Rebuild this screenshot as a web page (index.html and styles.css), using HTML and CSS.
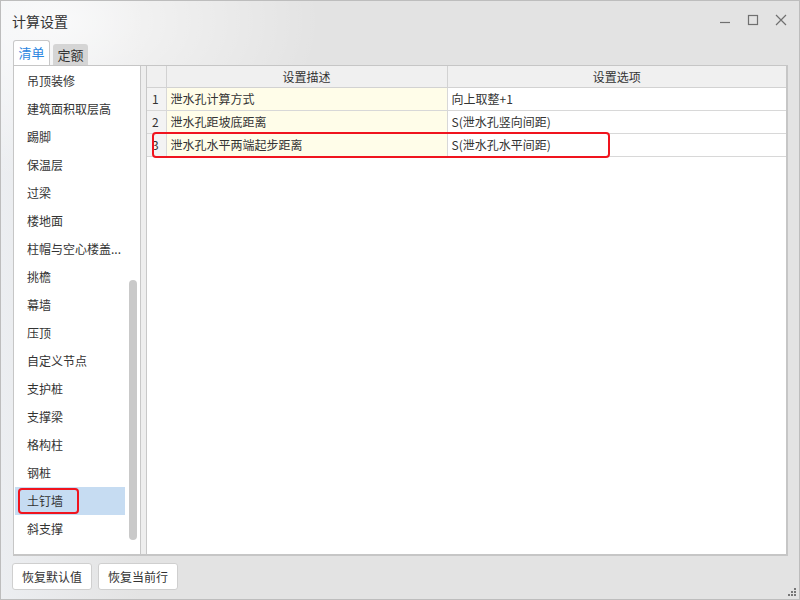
FILE: index.html
```html
<!DOCTYPE html>
<html lang="zh-CN">
<head>
<meta charset="utf-8">
<title>计算设置</title>
<link rel="stylesheet" href="styles.css">
</head>
<body>
<div class="window">
  <div class="titlebar">
    <span class="title">计算设置</span>
    <div class="controls">
      <svg class="ctl" width="12" height="12" viewBox="0 0 12 12"><path d="M1 8.5H11" stroke="#707070" stroke-width="1.2" fill="none"/></svg>
      <svg class="ctl" width="12" height="12" viewBox="0 0 12 12"><rect x="1.5" y="1.5" width="9" height="9" stroke="#707070" stroke-width="1.2" fill="none"/></svg>
      <svg class="ctl" width="12" height="12" viewBox="0 0 12 12"><path d="M1 1L11 11M11 1L1 11" stroke="#707070" stroke-width="1.2" fill="none"/></svg>
    </div>
  </div>
  <div class="tabs">
    <div class="tab active">清单</div>
    <div class="tab">定额</div>
  </div>
  <div class="content">
    <div class="list">
      <div class="item">吊顶装修</div>
      <div class="item">建筑面积取层高</div>
      <div class="item">踢脚</div>
      <div class="item">保温层</div>
      <div class="item">过梁</div>
      <div class="item">楼地面</div>
      <div class="item">柱帽与空心楼盖...</div>
      <div class="item">挑檐</div>
      <div class="item">幕墙</div>
      <div class="item">压顶</div>
      <div class="item">自定义节点</div>
      <div class="item">支护桩</div>
      <div class="item">支撑梁</div>
      <div class="item">格构柱</div>
      <div class="item">钢桩</div>
      <div class="item selected"><span class="mark">土钉墙</span></div>
      <div class="item">斜支撑</div>
      <div class="thumb"></div>
    </div>
    <div class="splitter"></div>
    <div class="grid">
      <table class="table">
        <thead>
          <tr><th class="num"></th><th class="desc">设置描述</th><th class="opt">设置选项</th></tr>
        </thead>
        <tbody>
          <tr><td class="num">1</td><td class="desc">泄水孔计算方式</td><td class="opt">向上取整+1</td></tr>
          <tr><td class="num">2</td><td class="desc">泄水孔距坡底距离</td><td class="opt">S(泄水孔竖向间距)</td></tr>
          <tr><td class="num">3</td><td class="desc">泄水孔水平两端起步距离</td><td class="opt">S(泄水孔水平间距)</td></tr>
        </tbody>
      </table>
      <div class="highlight"></div>
    </div>
  </div>
  <div class="buttons">
    <button class="btn">恢复默认值</button>
    <button class="btn">恢复当前行</button>
  </div>
  <svg class="grip" width="10" height="10" viewBox="0 0 10 10">
    <rect x="7" y="1" width="2" height="2" fill="#777"/>
    <rect x="4" y="4" width="2" height="2" fill="#777"/>
    <rect x="7" y="4" width="2" height="2" fill="#777"/>
    <rect x="1" y="7" width="2" height="2" fill="#777"/>
    <rect x="4" y="7" width="2" height="2" fill="#777"/>
    <rect x="7" y="7" width="2" height="2" fill="#777"/>
  </svg>
</div>
</body>
</html>
```
FILE: styles.css
```css
* { box-sizing: border-box; }
html, body { margin: 0; padding: 0; }
body {
  width: 800px;
  height: 600px;
  font-family: "Noto Sans CJK SC", "Noto Sans", sans-serif;
  font-size: 12px;
  color: #333;
}
.window {
  position: relative;
  width: 800px;
  height: 600px;
  border: 1px solid #bdbdbd;
  background:
    radial-gradient(ellipse 260px 160px at 60px 20px, rgba(255,255,255,0.75), rgba(255,255,255,0) 100%),
    linear-gradient(to right, #eceef1 0, #e3e3e3 140px);
  display: flex;
  flex-direction: column;
}
.titlebar {
  height: 39px;
  display: flex;
  align-items: center;
  padding-left: 11px;
  padding-right: 12px;
}
.title {
  font-size: 14px;
  color: #333;
  flex: 1;
  line-height: 20px;
}
.controls {
  display: flex;
  gap: 16px;
  align-items: center;
  margin-top: -2px;
}
.ctl { display: block; }
.tabs {
  height: 25px;
  display: flex;
  align-items: flex-end;
  gap: 3px;
  margin-left: 12px;
}
.tab {
  height: 21px;
  width: 35px;
  background: #d5d5d5;
  border-radius: 3px 3px 0 0;
  text-align: center;
  line-height: 21px;
  font-size: 13px;
  color: #333;
}
.tab.active {
  height: 25px;
  width: 37px;
  background: #fff;
  border: 1px solid #c8c8c8;
  border-bottom: none;
  line-height: 24px;
  color: #2a86e0;
}
.content {
  height: 491px;
  margin-left: 12px;
  margin-right: 11px;
  border: 1px solid #c6c6c6;
  border-right-width: 2px;
  border-bottom-width: 2px;
  display: flex;
}
.list {
  position: relative;
  width: 126px;
  background: #fff;
  padding: 1px 0 0 1px;
  overflow: hidden;
}
.item {
  height: 28px;
  width: 110px;
  line-height: 28px;
  padding-left: 12px;
  white-space: nowrap;
  color: #333;
}
.item.selected {
  background: #c6dcf2;
  padding-left: 3px;
  display: flex;
  align-items: center;
}
.mark {
  display: block;
  height: 26px;
  width: 61px;
  line-height: 22px;
  padding-left: 7px;
  border: 2px solid #f0141e;
  border-radius: 4px;
}
.thumb {
  position: absolute;
  left: 115px;
  top: 214px;
  width: 8px;
  height: 260px;
  background: #c9c9c9;
  border-radius: 4px;
}
.splitter {
  width: 7px;
  background: #eeeeee;
  border-left: 1px solid #c8c8c8;
  border-right: 1px solid #c8c8c8;
}
.grid {
  position: relative;
  flex: 1;
  background: #fff;
}
.table {
  border-collapse: collapse;
  width: 100%;
  table-layout: fixed;
}
.table th {
  height: 21px;
  background: #f0f0f0;
  font-weight: normal;
  color: #333;
  border-bottom: 1px solid #d2d2d2;
  border-right: 1px solid #d2d2d2;
  padding: 0;
  text-align: center;
}
.table th.opt, .table td.opt { border-right: none; }
.table td {
  height: 23px;
  border-bottom: 1px solid #d8d8d8;
  border-right: 1px solid #d8d8d8;
  padding: 0 0 0 4px;
  white-space: nowrap;
}
.table .num { width: 19px; }
.table th.desc, .table td.desc { width: 281px; }
.table td.num {
  background: #f3f3f3;
  padding-left: 5px;
}
.table td.desc { background: #fffde9; }
.table td.opt { background: #fff; }
.highlight {
  position: absolute;
  left: 5px;
  top: 66px;
  width: 458px;
  height: 26px;
  border: 2px solid #f0141e;
  border-radius: 4px;
  pointer-events: none;
}
.buttons {
  display: flex;
  gap: 6px;
  margin-left: 11px;
  margin-top: 7px;
}
.btn {
  height: 27px;
  width: 80px;
  background: #fff;
  border: 1px solid #cfcfcf;
  border-radius: 3px;
  font-family: "Noto Sans CJK SC", "Noto Sans", sans-serif;
  font-size: 12px;
  color: #333;
  padding: 0;
}
.grip {
  position: absolute;
  right: 2px;
  bottom: 2px;
}
```
